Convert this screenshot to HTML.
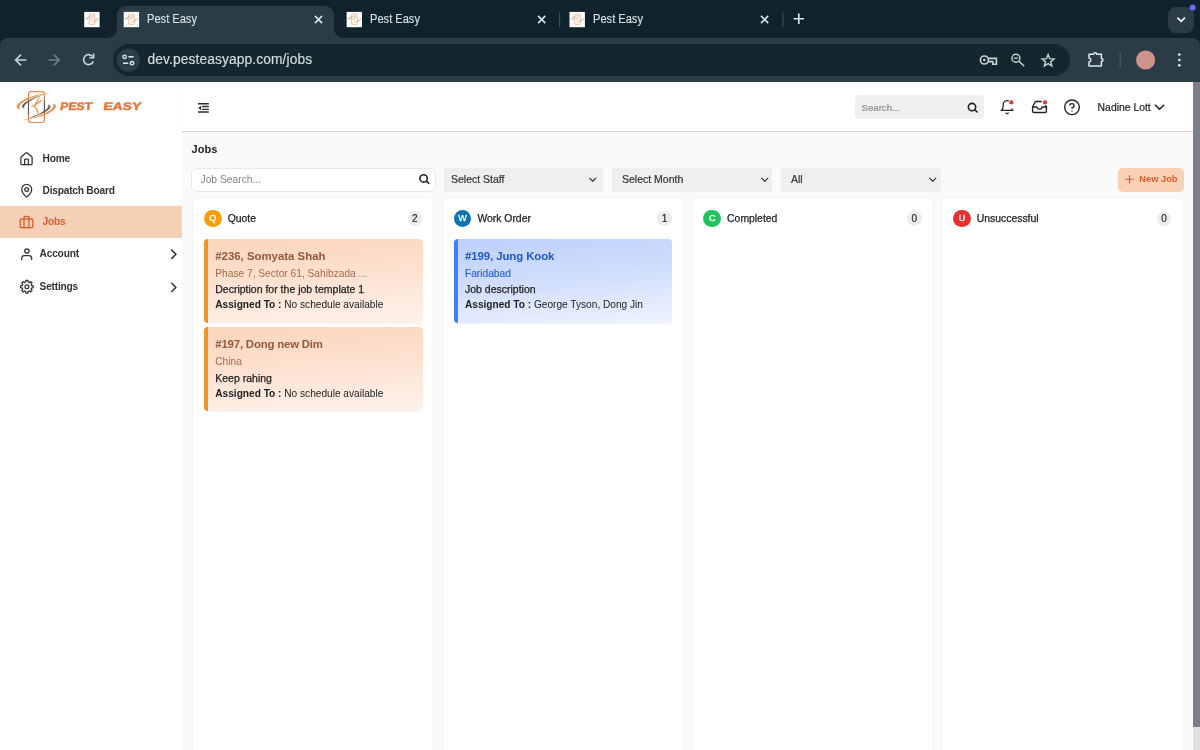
<!DOCTYPE html>
<html lang="en">
<head>
<meta charset="utf-8">
<title>Pest Easy</title>
<style>
*{box-sizing:border-box;margin:0;padding:0}
html,body{width:1200px;height:750px;overflow:hidden;background:#fafafa;font-family:"Liberation Sans",sans-serif;color:#222}
.abs{position:absolute}
#chrome{position:absolute;left:0;top:0;width:1200px;height:82.3px;z-index:5;background:#10232c}
#toolbar{position:absolute;left:0;top:37.7px;width:1200px;height:44.6px;background:linear-gradient(#2a3d47 0,#2a3d47 42.5px,#283a43 44.6px);border-radius:8px 8px 0 0}
#tabstrip{position:absolute;left:0;top:0;width:1200px;height:38px;background:#10232c}
.tab-active{position:absolute;left:116.8px;top:6px;width:217.2px;height:32px;background:#2a3d47;border-radius:9px 9px 0 0}
.tab-active:before,.tab-active:after{content:"";position:absolute;bottom:0;width:9px;height:9px;background:radial-gradient(circle at 0 0,rgba(0,0,0,0) 8.5px,#2a3d47 9px)}
.tab-active:before{left:-9px}
.tab-active:after{right:-9px;background:radial-gradient(circle at 100% 0,rgba(0,0,0,0) 8.5px,#2a3d47 9px)}
.tabtxt{position:absolute;top:12.2px;font-size:12px;color:#d5dee3;transform:scaleX(.925);transform-origin:0 0;-webkit-text-stroke:.2px #d5dee3;line-height:14px;white-space:nowrap}
#tsbtn{position:absolute;left:1168px;top:6.6px;width:26px;height:26px;border-radius:8px;background:#2a3d47}
#omni{position:absolute;left:113px;top:44px;width:957px;height:32px;border-radius:16px;background:#14272f}
#url{position:absolute;left:147.5px;top:51px;font-size:13.8px;line-height:18px;color:#d6dfe4;letter-spacing:.1px;-webkit-text-stroke:.15px #d6dfe4;white-space:nowrap}
#app-header{position:absolute;left:182px;top:82px;width:1011px;height:50.4px;background:#fff;border-bottom:1.4px solid #dcd3cd}
#sidebar{position:absolute;left:0;top:82px;width:182.4px;height:668px;background:#fff;border-right:1px solid #fafafa}
#scroll{position:absolute;left:1193.1px;top:82px;width:7px;height:668px;background:linear-gradient(#797e88 0,#797e88 644.7px,#e0e0e0 644.7px)}
.nav{position:absolute;left:0;width:182px;height:31.5px;font-size:10.2px;font-weight:bold;color:#333;letter-spacing:-.22px;white-space:nowrap}
.nav span{position:absolute;top:9.2px;line-height:14px}
.nav svg{position:absolute}
.nav.active{background:#f5d0b6;color:#d85c32}
.ttl{position:absolute;left:191.6px;top:141.6px;font-size:11px;font-weight:bold;color:#222;line-height:14px}
.inp{position:absolute;top:168px;height:23px;border-radius:4px;font-size:10.5px;line-height:23px;color:#333}
.sel{background:#efefef;height:23.6px;-webkit-text-stroke:.2px #333}
.col{position:absolute;top:197.4px;width:242px;height:560px;background:#fff;border:1px solid #f3f3f3;border-radius:7px}
.cir{position:absolute;left:10.9px;top:11.4px;-webkit-text-stroke:.3px #fff;width:17.5px;height:17.5px;border-radius:50%;color:#fff;font-size:9px;line-height:17.5px;text-align:center}
.ctitle{position:absolute;left:34.5px;top:13.9px;font-size:10.4px;line-height:13px;color:#222;font-weight:normal;-webkit-text-stroke:.25px #222;white-space:nowrap}
.cnt{position:absolute;right:11px;top:13px;width:14.6px;height:14.6px;border-radius:50%;background:#ececee;font-size:10px;line-height:16.6px;text-align:center;color:#2a2a2a;-webkit-text-stroke:.2px #2a2a2a}
.card{position:absolute;left:10.7px;width:218.8px;height:84px;border-radius:4px;border-left:4px solid #f0941f;background:linear-gradient(176deg,#fbd5bc 0%,#fde3d3 52%,#fef2eb 100%);box-shadow:0 1px 2px rgba(0,0,0,.06)}
.card .t{position:absolute;left:7.4px;top:10.2px;font-size:11.4px;font-weight:bold;color:#95583c;line-height:14px;white-space:nowrap}
.card .a{position:absolute;left:7.4px;top:28.2px;font-size:10.2px;color:#a8694a;line-height:13px;white-space:nowrap}
.card .d{position:absolute;left:7.4px;top:44.5px;font-size:10.5px;color:#222;-webkit-text-stroke:.25px #222;line-height:13px;white-space:nowrap}
.card .s{position:absolute;left:7.4px;top:59.5px;font-size:10.15px;color:#222;line-height:13px;white-space:nowrap}
.card.blue{border-left-color:#3b82f6;background:linear-gradient(174deg,#bbd0fb 0%,#d2dffc 50%,#eef3fe 100%)}
.card.blue .t{color:#2156c6;letter-spacing:-.08px}
.card.blue .a{color:#2f66da;-webkit-text-stroke:.2px #2f66da}
#hsearch{position:absolute;left:854.8px;top:95.2px;width:129.2px;height:23.8px;border-radius:4px;background:#f0f0f0}
#hsearch span{position:absolute;left:6.8px;top:5.6px;font-size:9.6px;line-height:13px;color:#8c8c8c;-webkit-text-stroke:.2px #8c8c8c}
#uname{position:absolute;left:1097.6px;top:100.8px;font-size:10.400px;line-height:14px;color:#222;-webkit-text-stroke:.2px #222}
#wrap{position:absolute;left:0;top:0;width:1200px;height:750px;overflow:hidden;will-change:transform}
</style>
</head>
<body>
<div id="wrap">
<div id="chrome">
  <div id="tabstrip"></div>
  <div id="toolbar"></div>
  <div class="tab-active"></div>
  <div id="tsbtn"></div>
  <div id="omni"></div>
  <div class="tabtxt" style="left:146.5px">Pest Easy</div>
  <div class="tabtxt" style="left:369.5px">Pest Easy</div>
  <div class="tabtxt" style="left:592.5px">Pest Easy</div>
  <div id="url">dev.pesteasyapp.com/jobs</div>
  <svg id="chrome-ic" width="1200" height="82" viewBox="0 0 1200 82" style="position:absolute;left:0;top:0" fill="none">
    <g transform="translate(84.2 11.9)"><rect x="0" y="0" width="15.400" height="15.300" fill="#fff"/><g transform="translate(0.900 1.800) scale(0.348) translate(-16.600 -91)" opacity=".62"><path d="M51.2 93.1C38 93.4 19 99.5 16.6 106.200C16.300 107.800 18.200 109.400 20.400 109.400C19.400 108.600 19 107.600 19.400 106.400C21.500 100.800 38 94.600 51.200 93.100Z" fill="#ee9250"/><path d="M44.600 94.800C36 96.400 23.600 101.600 22 106C21.800 107.400 23.400 108.400 24.800 108.400C24.200 107.800 24 107 24.300 106.200C25.800 102.400 36 97.400 44.600 94.800Z" fill="#6d5b52"/><path d="M21.4 119.9C34.6 119.6 53.6 113.5 56.0 106.8C56.3 105.2 54.4 103.6 52.2 103.6C53.2 104.4 53.6 105.4 53.2 106.6C51.1 112.2 34.6 118.4 21.4 119.9Z" fill="#ee9250"/><path d="M28.0 118.2C36.6 116.6 49.0 111.4 50.6 107.0C50.8 105.6 49.2 104.6 47.8 104.6C48.4 105.2 48.6 106.0 48.3 106.8C46.8 110.6 36.6 115.6 28.0 118.2Z" fill="#6d5b52"/><rect x="28.500" y="91.600" width="15.900" height="30.900" rx="2.400" stroke="#c4805f" stroke-width="2.2"/><path d="M38.800 98.200C37.600 100.600 35.600 103.400 34.400 105.800C35.800 108.200 37.400 110.600 38.300 112.800M34.800 105.200C37 103.600 39.400 101.800 41.400 100.600M34.400 105.800L31.800 106.200" stroke="#f09a4a" stroke-width="2.4" stroke-linecap="round" fill="none"/></g></g>
    <g transform="translate(123.7 11.9)"><rect x="0" y="0" width="15.400" height="15.300" fill="#fff"/><g transform="translate(0.900 1.800) scale(0.348) translate(-16.600 -91)" opacity=".62"><path d="M51.2 93.1C38 93.4 19 99.5 16.6 106.200C16.300 107.800 18.200 109.400 20.400 109.400C19.400 108.600 19 107.600 19.400 106.400C21.500 100.800 38 94.600 51.200 93.100Z" fill="#ee9250"/><path d="M44.600 94.800C36 96.400 23.600 101.600 22 106C21.800 107.400 23.400 108.400 24.800 108.400C24.200 107.800 24 107 24.300 106.200C25.800 102.400 36 97.400 44.600 94.800Z" fill="#6d5b52"/><path d="M21.4 119.9C34.6 119.6 53.6 113.5 56.0 106.8C56.3 105.2 54.4 103.6 52.2 103.6C53.2 104.4 53.6 105.4 53.2 106.6C51.1 112.2 34.6 118.4 21.4 119.9Z" fill="#ee9250"/><path d="M28.0 118.2C36.6 116.6 49.0 111.4 50.6 107.0C50.8 105.6 49.2 104.6 47.8 104.6C48.4 105.2 48.6 106.0 48.3 106.8C46.8 110.6 36.6 115.6 28.0 118.2Z" fill="#6d5b52"/><rect x="28.500" y="91.600" width="15.900" height="30.900" rx="2.400" stroke="#c4805f" stroke-width="2.2"/><path d="M38.800 98.200C37.600 100.600 35.600 103.400 34.400 105.800C35.800 108.200 37.400 110.600 38.300 112.800M34.800 105.200C37 103.600 39.400 101.800 41.400 100.600M34.400 105.800L31.800 106.200" stroke="#f09a4a" stroke-width="2.4" stroke-linecap="round" fill="none"/></g></g>
    <g transform="translate(346.6 11.9)"><rect x="0" y="0" width="15.400" height="15.300" fill="#fff"/><g transform="translate(0.900 1.800) scale(0.348) translate(-16.600 -91)" opacity=".62"><path d="M51.2 93.1C38 93.4 19 99.5 16.6 106.200C16.300 107.800 18.200 109.400 20.400 109.400C19.400 108.600 19 107.600 19.400 106.400C21.500 100.800 38 94.600 51.200 93.100Z" fill="#ee9250"/><path d="M44.600 94.800C36 96.400 23.600 101.600 22 106C21.800 107.400 23.400 108.400 24.800 108.400C24.200 107.800 24 107 24.300 106.200C25.800 102.400 36 97.400 44.600 94.800Z" fill="#6d5b52"/><path d="M21.4 119.9C34.6 119.6 53.6 113.5 56.0 106.8C56.3 105.2 54.4 103.6 52.2 103.6C53.2 104.4 53.6 105.4 53.2 106.6C51.1 112.2 34.6 118.4 21.4 119.9Z" fill="#ee9250"/><path d="M28.0 118.2C36.6 116.6 49.0 111.4 50.6 107.0C50.8 105.6 49.2 104.6 47.8 104.6C48.4 105.2 48.6 106.0 48.3 106.8C46.8 110.6 36.6 115.6 28.0 118.2Z" fill="#6d5b52"/><rect x="28.500" y="91.600" width="15.900" height="30.900" rx="2.400" stroke="#c4805f" stroke-width="2.2"/><path d="M38.800 98.200C37.600 100.600 35.600 103.400 34.400 105.800C35.800 108.200 37.400 110.600 38.300 112.800M34.800 105.200C37 103.600 39.400 101.800 41.400 100.600M34.400 105.800L31.800 106.200" stroke="#f09a4a" stroke-width="2.4" stroke-linecap="round" fill="none"/></g></g>
    <g transform="translate(569.5 11.9)"><rect x="0" y="0" width="15.400" height="15.300" fill="#fff"/><g transform="translate(0.900 1.800) scale(0.348) translate(-16.600 -91)" opacity=".62"><path d="M51.2 93.1C38 93.4 19 99.5 16.6 106.200C16.300 107.800 18.200 109.400 20.400 109.400C19.400 108.600 19 107.600 19.400 106.400C21.500 100.800 38 94.600 51.200 93.100Z" fill="#ee9250"/><path d="M44.600 94.800C36 96.400 23.600 101.600 22 106C21.800 107.400 23.400 108.400 24.800 108.400C24.200 107.800 24 107 24.300 106.200C25.800 102.400 36 97.400 44.600 94.800Z" fill="#6d5b52"/><path d="M21.4 119.9C34.6 119.6 53.6 113.5 56.0 106.8C56.3 105.2 54.4 103.6 52.2 103.6C53.2 104.4 53.6 105.4 53.2 106.6C51.1 112.2 34.6 118.4 21.4 119.9Z" fill="#ee9250"/><path d="M28.0 118.2C36.6 116.6 49.0 111.4 50.6 107.0C50.8 105.6 49.2 104.6 47.8 104.6C48.4 105.2 48.6 106.0 48.3 106.8C46.8 110.6 36.6 115.6 28.0 118.2Z" fill="#6d5b52"/><rect x="28.500" y="91.600" width="15.900" height="30.900" rx="2.400" stroke="#c4805f" stroke-width="2.2"/><path d="M38.800 98.200C37.600 100.600 35.600 103.400 34.400 105.800C35.800 108.200 37.400 110.600 38.300 112.800M34.800 105.200C37 103.600 39.400 101.800 41.400 100.600M34.400 105.800L31.800 106.200" stroke="#f09a4a" stroke-width="2.4" stroke-linecap="round" fill="none"/></g></g>
    <path transform="translate(318.5 19.5)" d="M-3.6-3.6L3.6 3.6M3.6-3.6L-3.6 3.6" stroke="#e1e8ec" stroke-width="1.5"/>
    <path transform="translate(541.7 19.5)" d="M-3.6-3.6L3.6 3.6M3.6-3.6L-3.6 3.6" stroke="#e1e8ec" stroke-width="1.5"/>
    <path transform="translate(764.6 19.5)" d="M-3.6-3.6L3.6 3.6M3.6-3.6L-3.6 3.6" stroke="#e1e8ec" stroke-width="1.5"/>
    <path d="M559.6 12.5V27M783 12.5V27" stroke="#3b4d56" stroke-width="1.2"/>
    <path d="M793.6 18.8H804M798.8 13.6V24" stroke="#e1e8ec" stroke-width="1.6"/>
    <path d="M1177.4 17.7L1181.2 21.4L1185 17.7" stroke="#f1f5f7" stroke-width="1.7"/>
    <circle cx="1192.6" cy="7.6" r="3" fill="#6b6cf3"/>
    <!-- nav -->
    <path d="M26.4 60H16.2M21 54.6L15.6 60L21 65.4" stroke="#c9d3d8" stroke-width="1.6"/>
    <path d="M48.4 60H58.6M53.8 54.6L59.2 60L53.8 65.4" stroke="#6f828c" stroke-width="1.6"/>
    <path d="M92.6 56.6A5 5 0 1 0 93.3 61.4" stroke="#c9d3d8" stroke-width="1.6"/>
    <path d="M93.6 53.6V57.8H89.4" stroke="#c9d3d8" stroke-width="1.6"/>
    <!-- site info -->
    <circle cx="128.3" cy="60" r="11.6" fill="#2b3f49"/>
    <circle cx="124.6" cy="56.8" r="1.7" stroke="#dfe6ea" stroke-width="1.4"/>
    <path d="M128.4 56.8H133.6M123 63.2H128.2" stroke="#dfe6ea" stroke-width="1.5"/>
    <circle cx="132" cy="63.2" r="1.7" stroke="#dfe6ea" stroke-width="1.4"/>
    <!-- key -->
    <circle cx="984.4" cy="60" r="4" stroke="#c9d3d8" stroke-width="1.6"/>
    <circle cx="984.3" cy="60" r="1.3" fill="#c9d3d8"/>
    <path d="M988.3 58.4H996.4V64.200H992.800V61.600H988.300" stroke="#c9d3d8" stroke-width="1.6"/>
    <!-- zoom -->
    <circle cx="1015.9" cy="58.2" r="4" stroke="#c9d3d8" stroke-width="1.4"/>
    <path d="M1019 61.3L1024.2 66.2" stroke="#c9d3d8" stroke-width="1.5"/>
    <path d="M1013.8 58.2H1018" stroke="#c9d3d8" stroke-width="1.3"/>
    <!-- star -->
    <path d="M1048.1 54.6L1049.7 58.7L1054.1 59.0L1050.7 61.7L1051.8 66.0L1048.1 63.6L1044.4 66.0L1045.5 61.7L1042.1 59.0L1046.5 58.7Z" stroke="#c9d3d8" stroke-width="1.4" stroke-linejoin="miter"/>
    <!-- puzzle -->
    <path d="M1089 54.2H1093.7A1.5 1.5 0 0 1 1096.7 54.2H1101.4V58.400A1.500 1.500 0 0 1 1101.400 61.400V66H1089V61.9A1.600 1.600 0 0 0 1089 58.300Z" stroke="#dfe6ea" stroke-width="1.5" stroke-linejoin="round"/>
    <path d="M1120.2 52.4V67.6" stroke="#4a5c66" stroke-width="1.2"/>
    <circle cx="1145.6" cy="60" r="9.6" fill="#cf9489"/>
    <circle cx="1179.3" cy="54.6" r="1.35" fill="#dfe6ea"/><circle cx="1179.3" cy="60" r="1.35" fill="#dfe6ea"/><circle cx="1179.3" cy="65.3" r="1.35" fill="#dfe6ea"/>
  </svg>
</div>
<div id="sidebar">
  <div class="nav" style="top:61px"><span style="left:42.5px">Home</span></div>
  <div class="nav" style="top:92.7px"><span style="left:42.5px">Dispatch Board</span></div>
  <div class="nav active" style="top:124.2px"><span style="left:42.5px">Jobs</span></div>
  <div class="nav" style="top:156px"><span style="left:39.6px">Account</span></div>
  <div class="nav" style="top:188.7px"><span style="left:39.6px">Settings</span></div>
</div>
<div id="app-header"></div>
<div class="ttl">Jobs</div>
<div class="inp" style="left:191.2px;width:244.6px;height:23.8px;background:#fff;border:1px solid #e9e9e9;border-radius:5px"><span style="position:absolute;left:8.3px;top:-.6px;color:#858585;font-size:10.3px">Job Search...</span></div>
<div class="inp sel" style="left:444px;width:159px"><span style="position:absolute;left:7px">Select Staff</span></div>
<div class="inp sel" style="left:612px;width:160px"><span style="position:absolute;left:10px">Select Month</span></div>
<div class="inp sel" style="left:781px;width:160px"><span style="position:absolute;left:10px">All</span></div>
<div class="inp" style="left:1118.3px;width:66px;height:23.7px;background:#f8d0b4;color:#d65f2f;font-weight:bold;font-size:9.3px;border-radius:5px"><span style="position:absolute;left:21px;top:-.2px">New Job</span></div>

<div class="col" style="left:192.2px">
  <div class="cir" style="background:#f59e0b">Q</div><div class="ctitle">Quote</div><div class="cnt">2</div>
  <div class="card" style="top:40.3px"><div class="t">#236, Somyata Shah</div><div class="a">Phase 7, Sector 61, Sahibzada ...</div><div class="d">Decription for the job template 1</div><div class="s"><b>Assigned To :</b> No schedule available</div></div>
  <div class="card" style="top:128.7px"><div class="t" style="letter-spacing:-.18px">#197, Dong new Dim</div><div class="a">China</div><div class="d">Keep rahing</div><div class="s"><b>Assigned To :</b> No schedule available</div></div>
</div>
<div class="col" style="left:441.9px">
  <div class="cir" style="background:#0d72b0">W</div><div class="ctitle">Work Order</div><div class="cnt">1</div>
  <div class="card blue" style="top:40.3px"><div class="t">#199, Jung Kook</div><div class="a">Faridabad</div><div class="d">Job description</div><div class="s"><b>Assigned To :</b> George Tyson, Dong Jin</div></div>
</div>
<div class="col" style="left:691.6px">
  <div class="cir" style="background:#1fc55c">C</div><div class="ctitle">Completed</div><div class="cnt">0</div>
</div>
<div class="col" style="left:941.3px">
  <div class="cir" style="background:#e8302e">U</div><div class="ctitle">Unsuccessful</div><div class="cnt">0</div>
</div>
<div id="hsearch"><span class="hdr-txt">Search...</span></div>
<div class="hdr-txt" id="uname">Nadine Lott</div>
<svg id="brand" width="90" height="14" viewBox="0 0 90 14" style="position:absolute;left:58px;top:99px"><text y="11.500" transform="skewX(-8)" font-family="Liberation Sans, sans-serif" font-weight="bold" font-size="10.800" fill="#e8763a" stroke="#e8763a" stroke-width=".5"><tspan x="3.400" textLength="32" lengthAdjust="spacingAndGlyphs">PEST</tspan><tspan x="46.600" textLength="37.800" lengthAdjust="spacingAndGlyphs">EASY</tspan></text></svg>
<svg id="app-ic" width="1200" height="750" viewBox="0 0 1200 750" style="position:absolute;left:0;top:0;pointer-events:none" fill="none">
<g id="logo">
<defs><linearGradient id="pg" x1="0" y1="0" x2="0" y2="1"><stop offset="0" stop-color="#ea8950"/><stop offset=".2" stop-color="#e28452"/><stop offset=".38" stop-color="#5e5552"/><stop offset=".66" stop-color="#5e5552"/><stop offset=".84" stop-color="#e28452"/><stop offset="1" stop-color="#ea8950"/></linearGradient></defs>
<rect x="28.500" y="91.600" width="15.900" height="30.900" rx="2.400" stroke="url(#pg)" stroke-width="1.2"/>
<path d="M51.2 93.1C38 93.4 19 99.5 16.6 106.200C16.300 107.800 18.200 109.400 20.400 109.400C19.400 108.600 19 107.600 19.400 106.400C21.500 100.800 38 94.600 51.200 93.100Z" fill="#ee9250"/>
<path d="M44.600 94.800C36 96.400 23.600 101.600 22 106C21.800 107.400 23.400 108.400 24.800 108.400C24.200 107.800 24 107 24.300 106.200C25.800 102.400 36 97.400 44.600 94.800Z" fill="#6d5b52"/>
<path d="M21.4 119.9C34.6 119.6 53.6 113.5 56.0 106.8C56.3 105.2 54.4 103.6 52.2 103.6C53.2 104.4 53.6 105.4 53.2 106.6C51.1 112.2 34.6 118.4 21.4 119.9Z" fill="#ee9250"/>
<path d="M28.0 118.2C36.6 116.6 49.0 111.4 50.6 107.0C50.8 105.6 49.2 104.6 47.8 104.6C48.4 105.2 48.6 106.0 48.3 106.8C46.8 110.6 36.6 115.6 28.0 118.2Z" fill="#6d5b52"/>
<path d="M38.800 98.200C37.600 100.600 35.600 103.400 34.400 105.800C35.800 108.200 37.400 110.600 38.300 112.800M34.800 105.200C37 103.600 39.400 101.800 41.400 100.600M34.400 105.800L31.800 106.200" stroke="#f09a4a" stroke-width="1.35" stroke-linecap="round" fill="none"/>
</g>
<path d="M198 103.700H208.800M202.200 106.500H208.800M202.200 109.300H208.800M198 112H208.800" stroke="#2a2a2a" stroke-width="1.35"/><path d="M201.200 105.700V110.300L198.200 108Z" fill="#2a2a2a"/>
<g transform="translate(19 151.5) scale(0.6250)" stroke="#333" stroke-width="2" stroke-linecap="round" stroke-linejoin="round" fill="none"><path d="M15 21v-8a1 1 0 0 0-1-1h-4a1 1 0 0 0-1 1v8"/><path d="M3 10a2 2 0 0 1 .709-1.528l7-5.999a2 2 0 0 1 2.582 0l7 5.999A2 2 0 0 1 21 10v9a2 2 0 0 1-2 2H5a2 2 0 0 1-2-2z"/></g>
<g transform="translate(19.2 183.2) scale(0.6250)" stroke="#333" stroke-width="2" stroke-linecap="round" stroke-linejoin="round" fill="none"><path d="M20 10c0 4.993-5.539 10.193-7.399 11.799a1 1 0 0 1-1.202 0C9.539 20.193 4 14.993 4 10a8 8 0 0 1 16 0"/><circle cx="12" cy="10" r="3"/></g>
<g transform="translate(19 214.5) scale(0.6250)" stroke="#d8572c" stroke-width="2" stroke-linecap="round" stroke-linejoin="round" fill="none"><rect width="20" height="14" x="2" y="7" rx="2" ry="2"/><path d="M16 21V5a2 2 0 0 0-2-2h-4a2 2 0 0 0-2 2v16"/></g>
<circle cx="26.9" cy="251" r="2.2" stroke="#333" stroke-width="1.25"/><path d="M21.7 259.6V258.4A2.8 2.800 0 0 1 24.500 255.600H28.900A2.800 2.800 0 0 1 31.700 258.400V259.600" stroke="#333" stroke-width="1.25" stroke-linecap="round"/>
<path d="M25.76 281.99L25.81 280.49L27.99 280.49L28.04 281.99L29.46 282.57L30.55 281.55L32.10 283.10L31.08 284.19L31.66 285.61L33.16 285.66L33.16 287.84L31.66 287.89L31.08 289.31L32.10 290.40L30.55 291.95L29.46 290.93L28.04 291.51L27.99 293.01L25.81 293.01L25.76 291.51L24.34 290.93L23.25 291.95L21.70 290.40L22.72 289.31L22.14 287.89L20.64 287.84L20.64 285.66L22.14 285.61L22.72 284.19L21.70 283.10L23.25 281.55L24.34 282.57Z" stroke="#333" stroke-width="1.25" stroke-linejoin="round"/><circle cx="26.9" cy="286.75" r="1.9" stroke="#333" stroke-width="1.25"/>
<g transform="translate(165.6 246) scale(0.6875)" stroke="#333" stroke-width="2.2" stroke-linecap="round" stroke-linejoin="round" fill="none"><path d="m9 18 6-6-6-6"/></g>
<g transform="translate(165.6 279.2) scale(0.6875)" stroke="#333" stroke-width="2.2" stroke-linecap="round" stroke-linejoin="round" fill="none"><path d="m9 18 6-6-6-6"/></g>
<circle cx="972" cy="107.1" r="3.7" stroke="#222" stroke-width="1.6"/><path d="M974.8 109.9L977.2 112" stroke="#222" stroke-width="1.6" stroke-linecap="round"/>
<g transform="translate(999.4 99.4) scale(0.6458)" stroke="#222" stroke-width="2" stroke-linecap="round" stroke-linejoin="round" fill="none"><path d="M19.4 14.9C20.2 16.4 21 17 21 17H3s3-2 3-9c0-3.3 2.7-6 6-6 .7 0 1.3.1 1.9.3"/><path d="M10.3 21a1.94 1.94 0 0 0 3.4 0"/></g>
<circle cx="1011.3" cy="102.4" r="2.1" fill="#d8364a"/>
<g transform="translate(1031.2 98.7) scale(0.6917)" stroke="#222" stroke-width="2" stroke-linecap="round" stroke-linejoin="round" fill="none"><path d="M22 12h-6l-2 3h-4l-2-3H2"/><path d="M14.5 4H7.24a2 2 0 0 0-1.79 1.11L2 12v6a2 2 0 0 0 2 2h16a2 2 0 0 0 2-2v-6l-1-2"/></g>
<circle cx="1045" cy="102.4" r="2.1" fill="#d8364a"/>
<g transform="translate(1063.2 98.5) scale(0.7333)" stroke="#222" stroke-width="1.9" stroke-linecap="round" stroke-linejoin="round" fill="none"><circle cx="12" cy="12" r="10"/><path d="M9.09 9a3 3 0 0 1 5.83 1c0 2-3 3-3 3"/><path d="M12 17h.01"/></g>
<g transform="translate(1151.3 99) scale(0.6875)" stroke="#222" stroke-width="2.3" stroke-linecap="round" stroke-linejoin="round" fill="none"><path d="m6 9 6 6 6-6"/></g>
<circle cx="423.6" cy="178.4" r="3.7" stroke="#222" stroke-width="1.6"/><path d="M426.4 181.2L428.8 183.3" stroke="#222" stroke-width="1.6" stroke-linecap="round"/>
<g transform="translate(586.5 173.5) scale(0.5208)" stroke="#222" stroke-width="2" stroke-linecap="round" stroke-linejoin="round" fill="none"><path d="m6 9 6 6 6-6"/></g>
<g transform="translate(758.5 173.5) scale(0.5208)" stroke="#222" stroke-width="2" stroke-linecap="round" stroke-linejoin="round" fill="none"><path d="m6 9 6 6 6-6"/></g>
<g transform="translate(926.5 173.5) scale(0.5208)" stroke="#222" stroke-width="2" stroke-linecap="round" stroke-linejoin="round" fill="none"><path d="m6 9 6 6 6-6"/></g>
<g transform="translate(1123.3 173) scale(0.5208)" stroke="#d65f2f" stroke-width="2.2" stroke-linecap="round" stroke-linejoin="round" fill="none"><path d="M5 12h14"/><path d="M12 5v14"/></g>
</svg>
<div id="scroll"></div>
</div>
</body>
</html>
